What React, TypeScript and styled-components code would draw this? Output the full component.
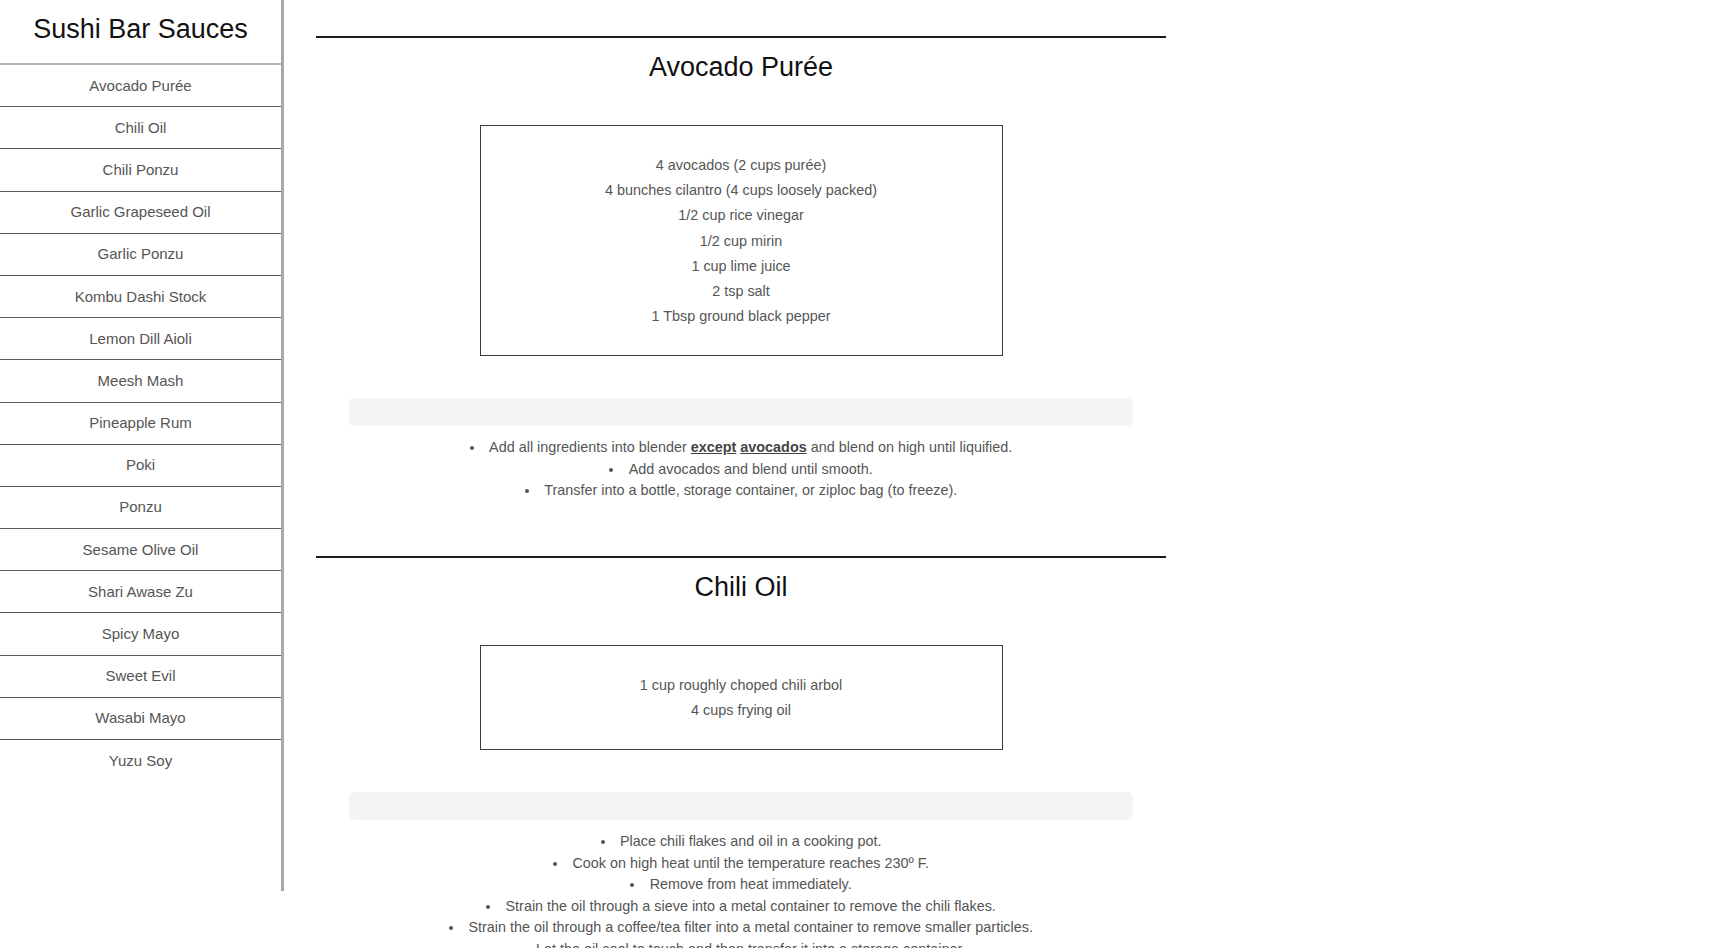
import React from "react";
import styled, { createGlobalStyle } from "styled-components";

const GlobalStyle = createGlobalStyle`
  html, body {
    margin: 0;
    padding: 0;
    background: #ffffff;
    font-family: "Liberation Sans", Arial, Helvetica, sans-serif;
  }
`;

const Page = styled.div`
  display: flex;
  align-items: flex-start;
`;

const Sidebar = styled.nav`
  flex: 0 0 auto;
  width: 281px;
  height: 94vh;
  border-right: 3px solid #a7a9a9;
  display: flex;
  flex-direction: column;
`;

const SidebarTitle = styled.h1`
  margin: 0;
  padding: 13px 0 18px;
  font-size: 27px;
  line-height: 32px;
  font-weight: normal;
  color: #111;
  text-align: center;
  border-bottom: 2px solid #b4b6b6;
`;

const NavList = styled.ul`
  list-style: none;
  margin: 0;
  padding: 0;
`;

const NavItem = styled.li<{ $last?: boolean }>`
  padding: 11.6px 0;
  font-size: 15px;
  line-height: 18px;
  color: #555;
  text-align: center;
  border-bottom: ${(p) => (p.$last ? "none" : "1px solid #5a5a5a")};
  cursor: pointer;
`;

const Main = styled.main`
  flex: 0 0 auto;
  width: 850px;
  margin-left: 32px;
  padding-top: 36px;
`;

const Recipe = styled.section`
  display: flex;
  flex-direction: column;
`;

const Rule = styled.hr`
  margin: 0;
  border: none;
  border-top: 2px solid #1c1c1c;
  height: 0;
`;

const RecipeTitle = styled.h2`
  margin: 13px 0 0;
  font-size: 27px;
  line-height: 32px;
  font-weight: normal;
  color: #111;
  text-align: center;
`;

const IngredientBox = styled.div`
  align-self: center;
  width: 521px;
  margin-top: 42px;
  padding: 27px 0 26px;
  border: 1px solid #3a3a3a;
  font-size: 14.4px;
  line-height: 25.2px;
  color: #555;
  text-align: center;
`;

const Ingredient = styled.div``;

const NoteBar = styled.div`
  margin: 42px 33px 0;
  height: 28px;
  background: #f5f5f5;
  border-radius: 5px;
`;

const Steps = styled.ul`
  margin: 11px 0 54px;
  padding: 0;
  list-style: disc inside;
  text-align: center;
  font-size: 14.4px;
  line-height: 21.5px;
  color: #555;
`;

const Emph = styled.u`
  font-weight: bold;
  color: #444;
`;

const sauces = [
  "Avocado Purée",
  "Chili Oil",
  "Chili Ponzu",
  "Garlic Grapeseed Oil",
  "Garlic Ponzu",
  "Kombu Dashi Stock",
  "Lemon Dill Aioli",
  "Meesh Mash",
  "Pineapple Rum",
  "Poki",
  "Ponzu",
  "Sesame Olive Oil",
  "Shari Awase Zu",
  "Spicy Mayo",
  "Sweet Evil",
  "Wasabi Mayo",
  "Yuzu Soy",
];

type RecipeData = {
  name: string;
  ingredients: string[];
  steps: React.ReactNode[];
};

const recipes: RecipeData[] = [
  {
    name: "Avocado Purée",
    ingredients: [
      "4 avocados (2 cups purée)",
      "4 bunches cilantro (4 cups loosely packed)",
      "1/2 cup rice vinegar",
      "1/2 cup mirin",
      "1 cup lime juice",
      "2 tsp salt",
      "1 Tbsp ground black pepper",
    ],
    steps: [
      <>
        Add all ingredients into blender <Emph>except</Emph> <Emph>avocados</Emph> and blend on high until
        liquified.
      </>,
      "Add avocados and blend until smooth.",
      "Transfer into a bottle, storage container, or ziploc bag (to freeze).",
    ],
  },
  {
    name: "Chili Oil",
    ingredients: ["1 cup roughly choped chili arbol", "4 cups frying oil"],
    steps: [
      "Place chili flakes and oil in a cooking pot.",
      "Cook on high heat until the temperature reaches 230º F.",
      "Remove from heat immediately.",
      "Strain the oil through a sieve into a metal container to remove the chili flakes.",
      "Strain the oil through a coffee/tea filter into a metal container to remove smaller particles.",
      "Let the oil cool to touch and then transfer it into a storage container.",
    ],
  },
];

export default function App() {
  return (
    <>
      <GlobalStyle />
      <Page>
        <Sidebar>
          <SidebarTitle>Sushi Bar Sauces</SidebarTitle>
          <NavList>
            {sauces.map((s, i) => (
              <NavItem key={s} $last={i === sauces.length - 1}>
                {s}
              </NavItem>
            ))}
          </NavList>
        </Sidebar>
        <Main>
          {recipes.map((r) => (
            <Recipe key={r.name}>
              <Rule />
              <RecipeTitle>{r.name}</RecipeTitle>
              <IngredientBox>
                {r.ingredients.map((ing) => (
                  <Ingredient key={ing}>{ing}</Ingredient>
                ))}
              </IngredientBox>
              <NoteBar />
              <Steps>
                {r.steps.map((st, i) => (
                  <li key={i}>{st}</li>
                ))}
              </Steps>
            </Recipe>
          ))}
        </Main>
      </Page>
    </>
  );
}
